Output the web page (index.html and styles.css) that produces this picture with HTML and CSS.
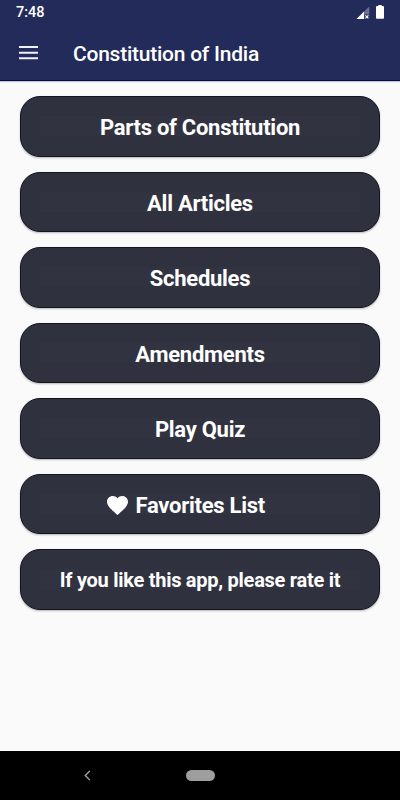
FILE: index.html
```
<!DOCTYPE html>
<html lang="en">
<head>
    <meta charset="UTF-8">
    <meta name="viewport" content="width=device-width, initial-scale=1.0">
    <title>Constitution of India</title>
    <link rel="stylesheet" href="styles.css">
</head>
<body>
    <header class="header">
        <div class="status-bar">
            <span class="time">7:48</span>
            <div class="status-icons">
                <svg class="signal" width="14" height="14" viewBox="0 0 14 14">
                    <path d="M13.3 0.4V13H0.6z" fill="#6a7097"/>
                    <path d="M8 5.6V13H0.6z" fill="#fff"/>
                    <path d="M8.3 8.5h5v4.5h-5z" fill="#232b5a"/>
                    <path d="M9.4 9.4l3 3M12.4 9.4l-3 3" stroke="#fff" stroke-width="1.2"/>
                </svg>
                <svg class="battery" width="8" height="14" viewBox="0 0 8 14">
                    <path d="M2.3 0h3.4v1H7q1 0 1 1v11q0 .8-.8.8H.8Q0 13.8 0 13V2q0-1 1-1h1.3z" fill="#fff"/>
                </svg>
            </div>
        </div>
        <div class="toolbar">
            <button class="menu-button" aria-label="Menu">
                <svg width="19" height="14" viewBox="0 0 19 14">
                    <path d="M0 1h19M0 6.7h19M0 12.3h19" stroke="#eef3fa" stroke-width="2"/>
                </svg>
            </button>
            <h1>Constitution of India</h1>
        </div>
    </header>

    <main class="menu">
        <button class="menu-item"><span>Parts of Constitution</span></button>
        <button class="menu-item"><span>All Articles</span></button>
        <button class="menu-item"><span>Schedules</span></button>
        <button class="menu-item"><span>Amendments</span></button>
        <button class="menu-item"><span>Play Quiz</span></button>
        <button class="menu-item favorites">
            <span>
                <svg class="heart" width="21" height="19" viewBox="2 3 20 18.35" preserveAspectRatio="none">
                    <path d="M12 21.35l-1.45-1.32C5.4 15.36 2 12.28 2 8.5 2 5.42 4.42 3 7.5 3c1.74 0 3.41.81 4.5 2.09C13.09 3.81 14.76 3 16.5 3 19.58 3 22 5.42 22 8.5c0 3.78-3.4 6.86-8.55 11.54L12 21.35z" fill="#fff"/>
                </svg>
                Favorites List
            </span>
        </button>
        <button class="menu-item rate"><span>If you like this app, please rate it</span></button>
    </main>

    <nav class="nav-bar">
        <svg class="back" width="7" height="11" viewBox="0 0 7 11">
            <path d="M5.8 1L1.2 5.5l4.6 4.5" fill="none" stroke="#a0a0a0" stroke-width="1.4"/>
        </svg>
        <div class="home"></div>
    </nav>
</body>
</html>
```
FILE: styles.css
```
body {
    font-family: Roboto, sans-serif;
    margin: 0;
    height: 800px;
    display: flex;
    flex-direction: column;
    background-color: #fafafa;
    overflow: hidden;
}
button {
    font-family: inherit;
    border: none;
    padding: 0;
    cursor: pointer;
}
svg {
    display: block;
    flex: none;
}
.header {
    box-sizing: border-box;
    height: 81px;
    background-color: #232b5a;
    border-bottom: 1px solid #0b0b50;
    box-shadow: 0 1px 1px rgba(35, 43, 90, 0.25);
    color: white;
}
.status-bar {
    display: flex;
    justify-content: space-between;
    height: 26px;
    padding: 0 16px;
}
.time {
    font-size: 14.5px;
    font-weight: 500;
    line-height: 25px;
}
.status-icons {
    display: flex;
    gap: 6px;
    padding-top: 5px;
}
.signal {
    margin-top: 1px;
}
.toolbar {
    display: flex;
    align-items: center;
    height: 53px;
    padding-left: 19px;
}
.menu-button {
    background: none;
    margin-right: 35px;
}
h1 {
    margin: 0;
    padding-top: 3px;
    font-size: 21px;
    font-weight: 500;
    letter-spacing: -0.24px;
    line-height: 53px;
}
.menu {
    flex: 1;
    display: flex;
    flex-direction: column;
    gap: 15px;
    padding: 15px 20.4px;
}
.menu-item {
    box-sizing: border-box;
    height: 60.5px;
    padding: 19px 18.6px;
    border: 1px solid #151520;
    border-radius: 20px;
    background-color: #30313e;
    box-shadow: 0 1px 2px rgba(0, 0, 0, 0.28);
    color: white;
    font-size: 22px;
    font-weight: 700;
    letter-spacing: -0.27px;
}
.menu-item span {
    box-sizing: border-box;
    display: flex;
    align-items: center;
    justify-content: center;
    height: 20px;
    padding-top: 4px;
    background-color: #323340;
    line-height: 20px;
    white-space: nowrap;
}
.menu-item.favorites span {
    padding-right: 28.5px;
}
.heart {
    margin: 0 8px 0 0;
}
.menu-item.rate {
    font-size: 20px;
}
.menu-item.rate span {
    padding-top: 2px;
}
.nav-bar {
    display: flex;
    align-items: center;
    height: 49px;
    padding-left: 84px;
    background-color: black;
}
.home {
    width: 29px;
    height: 11px;
    margin-left: 95px;
    border-radius: 6px;
    background-color: #9e9e9e;
}
```
